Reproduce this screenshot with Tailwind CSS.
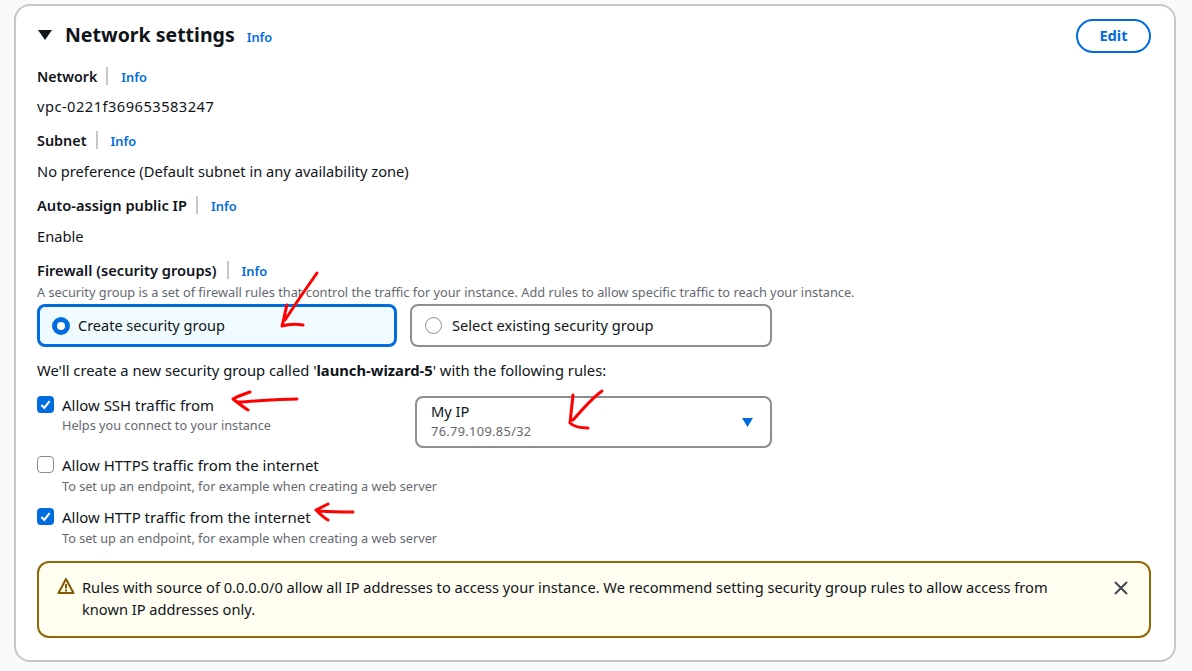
<!DOCTYPE html>
<html lang="en">
<head>
    <meta charset="UTF-8">
    <title>Network settings</title>
    <script src="https://cdn.jsdelivr.net/npm/@tailwindcss/browser@4"></script>
</head>
<body class="bg-[#fafafa] h-[671px] overflow-hidden relative font-['Noto_Sans',sans-serif] text-[14.66px] leading-[20px] text-[#0f141a]">

    <!-- Card -->
    <div class="absolute left-[14px] top-[4px] w-[1162px] h-[658px] bg-white border-2 border-[#c6c6cd] rounded-[16px] pl-[21px] pr-[23px]">

        <!-- Header -->
        <div class="flex items-start justify-between pt-[13px] h-[50px]">
            <div class="flex items-center h-[30px] mt-[1px]">
                <svg class="w-[14px] h-[10px] ml-[1px] mr-[13px]" viewBox="0 0 14 10"><path d="M0 0h14L7 10z" fill="#0f141a"/></svg>
                <span class="text-[19.5px] font-bold leading-[30px]">Network settings</span>
                <a class="ml-[12px] mt-[3px] text-[12.8px] font-semibold text-[#006ce0]">Info</a>
            </div>
            <button class="w-[75px] h-[34px] pb-[3px] border-2 border-[#006ce0] rounded-full text-[#006ce0] font-bold text-[14.66px]">Edit</button>
        </div>

        <!-- Read-only fields -->
        <div class="flex items-center h-[20px] mt-[10px]">
            <span class="mt-[1px] font-semibold text-[14.2px]">Network</span>
            <span class="w-[2px] h-[18px] bg-[#c6c6cd] ml-[9px] mr-[13px]"></span>
            <a class="mt-[1px] text-[12.8px] font-semibold text-[#006ce0]">Info</a>
        </div>
        <div class="mt-[10px] h-[20px] tracking-[0.47px]">vpc-0221f369653583247</div>

        <div class="flex items-center h-[20px] mt-[14px]">
            <span class="mt-[2px] font-semibold text-[14.4px]">Subnet</span>
            <span class="w-[2px] h-[18px] bg-[#c6c6cd] ml-[9px] mr-[13px]"></span>
            <a class="mt-[1px] text-[12.8px] font-semibold text-[#006ce0]">Info</a>
        </div>
        <div class="mt-[11px] h-[20px]">No preference (Default subnet in any availability zone)</div>

        <div class="flex items-center h-[20px] mt-[14px]">
            <span class="font-semibold">Auto-assign public IP</span>
            <span class="w-[2px] h-[18px] bg-[#c6c6cd] ml-[9px] mr-[13px]"></span>
            <a class="mt-[2px] text-[12.8px] font-semibold text-[#006ce0]">Info</a>
        </div>
        <div class="mt-[11px] h-[20px]">Enable</div>

        <!-- Firewall -->
        <div class="flex items-center h-[20px] mt-[14px]">
            <span class="font-semibold">Firewall (security groups)</span>
            <span class="w-[2px] h-[18px] bg-[#c6c6cd] ml-[10px] mr-[13px]"></span>
            <a class="mt-[2px] text-[12.8px] font-semibold text-[#006ce0]">Info</a>
        </div>
        <div class="text-[12.77px] leading-[16px] text-[#656871] mt-[4px]">A security group is a set of firewall rules that control the traffic for your instance. Add rules to allow specific traffic to reach your instance.</div>

        <div class="flex gap-[13px] mt-[4px]">
            <div class="w-[360px] h-[43px] flex items-center border-[3px] border-[#006ce0] rounded-[8px] bg-[#f0fbff] pl-[12px]">
                <span class="w-[18px] h-[18px] rounded-full border-[5px] border-[#006ce0] bg-white"></span>
                <span class="ml-[8px] pb-[2px] text-[14.5px]">Create security group</span>
            </div>
            <div class="w-[362px] h-[43px] flex items-center border-2 border-[#8c8c94] rounded-[8px] pl-[13px]">
                <span class="w-[17px] h-[17px] rounded-full border border-[#8c8c94] bg-white"></span>
                <span class="ml-[10px] pb-[2px]">Select existing security group</span>
            </div>
        </div>

        <div class="mt-[13px] h-[20px] text-[14.75px]">We'll create a new security group called '<b class="font-bold">launch-wizard-5</b>' with the following rules:</div>

        <!-- Rules -->
        <div class="flex mt-[15px] h-[52px]">
            <div class="w-[378px] flex items-start">
                <span class="w-[17px] h-[17px] mt-[1px] rounded-[4px] bg-[#006ce0] flex items-center justify-center">
                    <svg class="w-[11px] h-[11px]" viewBox="0 0 12 12" fill="none"><path d="M1.5 6.5 4.7 9.8 10.5 2.2" stroke="#fff" stroke-width="2.2"/></svg>
                </span>
                <div class="ml-[8px]">
                    <div class="text-[14.96px]">Allow SSH traffic from</div>
                    <div class="text-[12.7px] leading-[16px] text-[#656871] mt-[2px]">Helps you connect to your instance</div>
                </div>
            </div>
            <div class="w-[357px] h-[52px] mt-[1px] border-2 border-[#8c8c94] rounded-[8px] flex items-center justify-between pl-[14px] pr-[17px]">
                <div class="pb-[4px]">
                    <div class="leading-[20px]">My IP</div>
                    <div class="text-[12.8px] leading-[16px] text-[#656871] mt-[2px] tracking-[0.33px]">76.79.109.85/32</div>
                </div>
                <svg class="w-[11px] h-[9px]" viewBox="0 0 11 9"><path d="M0 0h11L5.5 9z" fill="#006ce0"/></svg>
            </div>
        </div>

        <div class="flex items-start mt-[8px]">
            <span class="w-[17px] h-[17px] mt-[1px] rounded-[4px] border border-[#8c8c94] bg-white"></span>
            <div class="ml-[8px]">
                <div class="text-[14.96px]">Allow HTTPS traffic from the internet</div>
                <div class="text-[12.7px] leading-[16px] text-[#656871] mt-[3px]">To set up an endpoint, for example when creating a web server</div>
            </div>
        </div>
        <div class="flex items-start mt-[13px]">
            <span class="w-[17px] h-[17px] mt-[1px] rounded-[4px] bg-[#006ce0] flex items-center justify-center">
                <svg class="w-[11px] h-[11px]" viewBox="0 0 12 12" fill="none"><path d="M1.5 6.5 4.7 9.8 10.5 2.2" stroke="#fff" stroke-width="2.2"/></svg>
            </span>
            <div class="ml-[8px]">
                <div class="text-[14.96px]">Allow HTTP traffic from the internet</div>
                <div class="text-[12.7px] leading-[16px] text-[#656871] mt-[3px]">To set up an endpoint, for example when creating a web server</div>
            </div>
        </div>

        <!-- Warning -->
        <div class="mt-[15px] w-[1114px] h-[77px] border-2 border-[#906806] rounded-[12px] bg-[#fffef0] flex items-start pl-[18px] pt-[13px] relative">
            <svg class="w-[18px] h-[18px] mt-[1px] shrink-0" viewBox="0 0 18 18" fill="none"><path d="M9 2 1.5 16h15z" stroke="#855900" stroke-width="2" stroke-linejoin="round"/><path d="M9 7v4.5M9 12.6v1.8" stroke="#855900" stroke-width="2"/></svg>
            <div class="ml-[7px] w-[990px] leading-[22px] text-[14.63px]">Rules with source of 0.0.0.0/0 allow all IP addresses to access your instance. We recommend setting security group rules to allow access from known IP addresses only.</div>
            <svg class="absolute right-[20px] top-[17px] w-[16px] h-[16px]" viewBox="0 0 16 16" fill="none"><path d="M2 2l12 12M14 2 2 14" stroke="#424650" stroke-width="2"/></svg>
        </div>
    </div>

    <!-- Red annotations drawn over the screenshot -->
    <svg class="absolute inset-0 w-[1192px] h-[671px] pointer-events-none" viewBox="0 0 1192 671" fill="none" stroke="#f00" stroke-width="3" stroke-linecap="round" stroke-linejoin="round">
        <path d="M317 273C307 287 296 303 285 320M287 305C285 312 284 319 282 326C289 324 296 324 303 325"/>
        <path d="M297 399C278 399 258 401 238 402M250 392C244 394 238 396 233 399C238 403 243 407 248 410"/>
        <path d="M602 391C592 398 582 410 573 420M597 395C587 404 579 413 573 420M573 395C572 404 571 414 570 423C574 427 580 428 588 428"/>
        <path d="M353 512C343 512 332 512 320 511M328 504C324 506 320 508 316 510C320 514 324 518 328 520"/>
    </svg>

</body>
</html>
